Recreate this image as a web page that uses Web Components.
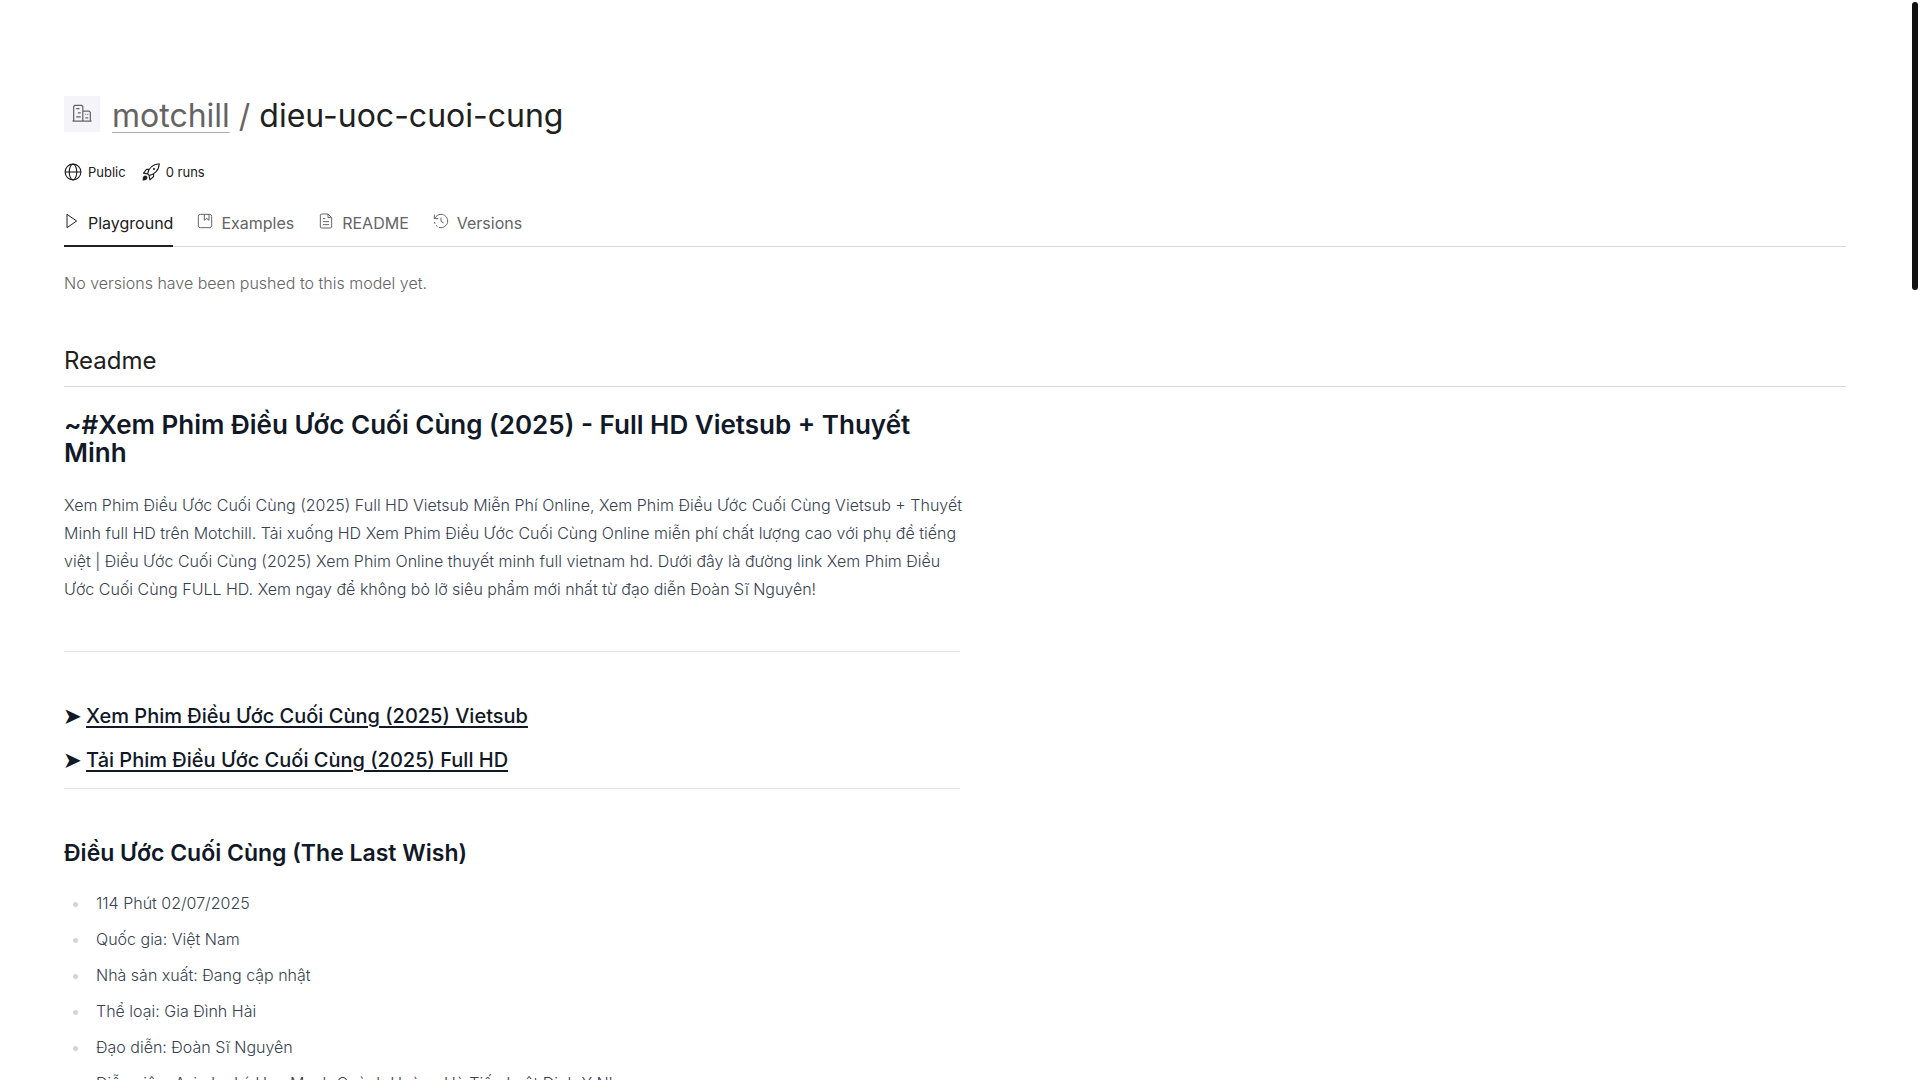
<!DOCTYPE html>
<html lang="vi">
<head>
<meta charset="utf-8">
<meta name="viewport" content="width=device-width, initial-scale=1">
<title>motchill/dieu-uoc-cuoi-cung</title>
<style>
    html { scrollbar-width: none; }
    body {
        margin: 0;
        background: #fff;
        color: #202020;
        font-family: Inter, "Liberation Sans", sans-serif;
        font-size: 16px;
        line-height: 24px;
    }
</style>
</head>
<body>
<model-page>
    <model-header slot="header" owner="motchill" name="dieu-uoc-cuoi-cung"></model-header>
    <model-stats slot="header">
        <stat-item icon="globe">Public</stat-item>
        <stat-item icon="rocket">0 runs</stat-item>
    </model-stats>
    <tab-bar slot="header">
        <tab-link icon="play" active>Playground</tab-link>
        <tab-link icon="album">Examples</tab-link>
        <tab-link icon="doc">README</tab-link>
        <tab-link icon="history">Versions</tab-link>
    </tab-bar>
    <empty-note>No versions have been pushed to this model yet.</empty-note>
    <section-title>Readme</section-title>
    <readme-content></readme-content>
</model-page>
<scroll-thumb></scroll-thumb>

<script>
const icons = {
    building: '<path d="M.5 20.5h23M2 20.5V3L3.500 1.500h8L13 3v17.500M13 8.500h7.500L22 10v10.500M5 5.500h4M7 10.500h3.500M5 15.500h5.500M16 12.500h1M18.500 12.500h1M16 16.500h3.500"/>',
    globe: '<circle cx="12" cy="12" r="10.500"/><ellipse cx="12" cy="12" rx="5" ry="10.500"/><path d="M1.500 12h21"/>',
    rocket: '<path d="M9.500 16.500 7.500 14.500C8.500 8 13.500 2 23 1c-.5 9.500-7 14.500-13.500 15.500zM9.500 8.500H6L2 13.500l5.500 1M15.500 14.500V18l-5 4.500-1-6"/><circle cx="16" cy="8" r=".7"/><path d="M5 17.500c-2 0-3.500 1.500-3.500 5 3.500 0 5-1 5-3.500z" fill="currentColor"/>',
    play: '<path d="M4.500 2v20L19 12z"/>',
    album: '<rect x="2" y="2" width="20" height="20" rx="3"/><path d="M11 2v9l3.500-3L18 11V2"/>',
    doc: '<path d="M5 1.500h10L20.500 7v14l-1.500 1.500H5L3.500 21V3zM15 1.500V7h5.500M7.500 8.500h3.500M7.500 13h9M7.500 17.500h9"/>',
    history: '<path d="M2 2.500v6h6M2.500 8C4.500 4.500 8 2 12 2c5.500 0 10 4.500 10 10s-4.500 10-10 10" /><path d="M12 22C7 22 2.500 18 2 12.500" stroke-dasharray="3 2.500"/><path d="M12 7v5.500l4 2.500"/>'
};

class IconGlyph extends HTMLElement {
    constructor() {
        super();
        this.attachShadow({ mode: 'open' });
    }

    connectedCallback() {
        this.shadowRoot.innerHTML = `
            <style>
                :host {
                    display: block;
                    flex: none;
                    width: 16px;
                    height: 16px;
                }
                svg {
                    display: block;
                    width: 100%;
                    height: 100%;
                }
            </style>
            <svg viewBox="0 0 24 24" fill="none" stroke="currentColor" stroke-width="1.5" stroke-linejoin="round" aria-hidden="true">${icons[this.getAttribute('name')]}</svg>
        `;
    }
}
customElements.define('icon-glyph', IconGlyph);

class ModelPage extends HTMLElement {
    constructor() {
        super();
        this.attachShadow({ mode: 'open' });
        this.shadowRoot.innerHTML = `
            <style>
                :host {
                    display: block;
                    padding: 96px 74px 32px 64px;
                }
            </style>
            <header><slot name="header"></slot></header>
            <main><slot></slot></main>
        `;
    }
}
customElements.define('model-page', ModelPage);

class ModelHeader extends HTMLElement {
    constructor() {
        super();
        this.attachShadow({ mode: 'open' });
    }

    connectedCallback() {
        this.shadowRoot.innerHTML = `
            <style>
                :host {
                    display: flex;
                    align-items: flex-start;
                    gap: 12px;
                    padding-bottom: 28px;
                }
                .avatar {
                    display: flex;
                    align-items: center;
                    justify-content: center;
                    width: 36px;
                    height: 36px;
                    background: #f5f5f9;
                    color: #646464;
                }
                icon-glyph {
                    width: 20px;
                    height: 20px;
                }
                h1 {
                    margin: 0;
                    font-size: 32px;
                    font-weight: 400;
                    line-height: 40px;
                }
                a {
                    color: #646464;
                    text-decoration: underline;
                    text-decoration-color: #aaa;
                    text-decoration-thickness: 1px;
                    text-underline-offset: 5px;
                }
                .slash { color: #646464; }
            </style>
            <div class="avatar"><icon-glyph name="building"></icon-glyph></div>
            <h1><a href="#"></a> <span class="slash">/</span> <span class="name"></span></h1>
        `;
        this.shadowRoot.querySelector('a').textContent = this.getAttribute('owner');
        this.shadowRoot.querySelector('.name').textContent = this.getAttribute('name');
    }
}
customElements.define('model-header', ModelHeader);

class ModelStats extends HTMLElement {
    constructor() {
        super();
        this.attachShadow({ mode: 'open' });
        this.shadowRoot.innerHTML = `
            <style>
                :host {
                    display: flex;
                    gap: 16px;
                    padding-bottom: 24px;
                }
            </style>
            <slot></slot>
        `;
    }
}
customElements.define('model-stats', ModelStats);

class StatItem extends HTMLElement {
    constructor() {
        super();
        this.attachShadow({ mode: 'open' });
    }

    connectedCallback() {
        this.shadowRoot.innerHTML = `
            <style>
                :host {
                    display: flex;
                    align-items: center;
                    gap: 6px;
                    height: 16px;
                    font-size: 13px;
                    line-height: 16px;
                }
                icon-glyph {
                    width: 18px;
                    height: 18px;
                }
            </style>
            <icon-glyph name="${this.getAttribute('icon')}"></icon-glyph>
            <slot></slot>
        `;
    }
}
customElements.define('stat-item', StatItem);

class TabBar extends HTMLElement {
    constructor() {
        super();
        this.attachShadow({ mode: 'open' });
        this.shadowRoot.innerHTML = `
            <style>
                :host {
                    display: block;
                    border-bottom: 1px solid #d9d9d9;
                }
                nav {
                    display: flex;
                    gap: 24px;
                    margin-bottom: -1px;
                }
            </style>
            <nav><slot></slot></nav>
        `;
    }
}
customElements.define('tab-bar', TabBar);

class TabLink extends HTMLElement {
    constructor() {
        super();
        this.attachShadow({ mode: 'open' });
    }

    connectedCallback() {
        this.shadowRoot.innerHTML = `
            <style>
                :host {
                    display: block;
                    color: #646464;
                    border-bottom: 2px solid transparent;
                }
                :host([active]) {
                    color: #202020;
                    border-color: #202020;
                }
                a {
                    display: flex;
                    gap: 8px;
                    padding: 7px 0 10px;
                    color: inherit;
                    text-decoration: none;
                }
                icon-glyph { margin-top: 2px; }
            </style>
            <a href="#"><icon-glyph name="${this.getAttribute('icon')}"></icon-glyph><slot></slot></a>
        `;
    }
}
customElements.define('tab-link', TabLink);

class EmptyNote extends HTMLElement {
    constructor() {
        super();
        this.attachShadow({ mode: 'open' });
        this.shadowRoot.innerHTML = `
            <style>
                :host {
                    display: block;
                    color: #646464;
                    font-weight: 300;
                }
                p { margin: 24px 0 48px; }
            </style>
            <p><slot></slot></p>
        `;
    }
}
customElements.define('empty-note', EmptyNote);

class SectionTitle extends HTMLElement {
    constructor() {
        super();
        this.attachShadow({ mode: 'open' });
        this.shadowRoot.innerHTML = `
            <style>
                :host {
                    display: block;
                    border-bottom: 1px solid #d9d9d9;
                }
                h2 {
                    margin: 0;
                    padding-bottom: 8px;
                    font-size: 24px;
                    font-weight: 400;
                    line-height: 35px;
                }
            </style>
            <h2><slot></slot></h2>
        `;
    }
}
customElements.define('section-title', SectionTitle);

class ReadmeContent extends HTMLElement {
    constructor() {
        super();
        this.attachShadow({ mode: 'open' });
        this.shadowRoot.innerHTML = `
            <style>
                :host {
                    display: block;
                    max-width: 896px;
                    padding-top: 24px;
                    color: #374151;
                    font-weight: 300;
                    line-height: 28px;
                }
                h1, h2, h3, a { color: #111827; }
                h1, h2, h3 { font-weight: 600; }
                h1 {
                    margin: 0 0 24px;
                    font-size: 26px;
                    line-height: 28px;
                }
                h2 {
                    margin: 48px 0 20px;
                    font-size: 23px;
                    line-height: 32px;
                }
                h3 {
                    margin: 0 0 12px;
                    font-size: 20px;
                    line-height: 32px;
                }
                a {
                    font-weight: 500;
                    text-decoration-thickness: 2px;
                    text-underline-offset: 3px;
                }
                p { margin: 0 -8px 0 0; }
                hr {
                    margin: 48px 0;
                    border: 0;
                    border-top: 1px solid #e5e7eb;
                }
                h3 + hr { margin-top: 0; }
                ul {
                    margin: 0;
                    padding-left: 26px;
                }
                li {
                    padding-left: 6px;
                    margin-bottom: 8px;
                }
                li::marker { color: #d1d5db; }
            </style>
            <h1>~#Xem Phim Điều Ước Cuối Cùng (2025) - Full HD Vietsub + Thuyết Minh</h1>
            <p>Xem Phim Điều Ước Cuối Cùng (2025) Full HD Vietsub Miễn Phí Online, Xem Phim Điều Ước Cuối Cùng Vietsub + Thuyết Minh full HD trên Motchill. Tải xuống HD Xem Phim Điều Ước Cuối Cùng Online miễn phí chất lượng cao với phụ đề tiếng việt | Điều Ước Cuối Cùng (2025) Xem Phim Online thuyết minh full vietnam hd. Dưới đây là đường link Xem Phim Điều Ước Cuối Cùng FULL HD. Xem ngay để không bỏ lỡ siêu phẩm mới nhất từ đạo diễn Đoàn Sĩ Nguyên!</p>
            <hr>
            <h3>➤ <a href="#">Xem Phim Điều Ước Cuối Cùng (2025) Vietsub</a></h3>
            <h3>➤ <a href="#">Tải Phim Điều Ước Cuối Cùng (2025) Full HD</a></h3>
            <hr>
            <h2>Điều Ước Cuối Cùng (The Last Wish)</h2>
            <ul>
                <li>114 Phút 02/07/2025</li>
                <li>Quốc gia: Việt Nam</li>
                <li>Nhà sản xuất: Đang cập nhật</li>
                <li>Thể loại: Gia Đình Hài</li>
                <li>Đạo diễn: Đoàn Sĩ Nguyên</li>
                <li>Diễn viên: Avin Lu Lý Hạo Mạnh Quỳnh Hoàng Hà Tiến Luật Đinh Y Nhung</li>
            </ul>
        `;
    }
}
customElements.define('readme-content', ReadmeContent);

// page scroll indicator, floats over the right edge
class ScrollThumb extends HTMLElement {
    constructor() {
        super();
        this.attachShadow({ mode: 'open' });
        this.shadowRoot.innerHTML = `
            <style>
                :host {
                    position: fixed;
                    top: 2px;
                    right: 2px;
                    width: 6px;
                    height: 288px;
                    border-radius: 3px;
                    background: #111;
                }
            </style>
        `;
    }
}
customElements.define('scroll-thumb', ScrollThumb);
</script>
</body>
</html>
